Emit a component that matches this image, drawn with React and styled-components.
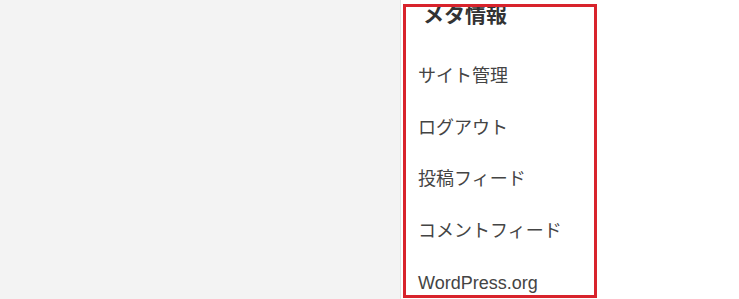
import styled, { createGlobalStyle } from 'styled-components'

const GlobalStyle = createGlobalStyle`
  html, body {
    margin: 0;
    padding: 0;
    background: #ffffff;
  }
  body {
    font-family: "Liberation Sans", "Noto Sans CJK JP", sans-serif;
    color: #333333;
  }
`

const Page = styled.div`
  display: flex;
  width: 739px;
  height: 299px;
  overflow: hidden;
  background: #ffffff;
`

const MainColumn = styled.div`
  width: 400px;
  height: 100%;
  background: #f3f3f3;
  border-right: 1px solid #e2e2e2;
  flex-shrink: 0;
`

const SideColumn = styled.aside`
  padding: 4px 0 0 2px;
`

const Widget = styled.section`
  box-sizing: border-box;
  width: 194px;
  height: 294px;
  border: 3px solid #d8232c;
  overflow: hidden;
  padding: 0 0 0 12px;
`

const WidgetTitle = styled.h2`
  margin: -7px 0 21px 5px;
  font-size: 21px;
  line-height: 30px;
  font-weight: 700;
  color: #333333;
  white-space: nowrap;
`

const LinkList = styled.ul`
  list-style: none;
  margin: 0;
  padding: 0;
`

const LinkItem = styled.li`
  padding: 12px 0;
  line-height: 27.7px;
  font-size: 18px;
  color: #444444;
  white-space: nowrap;
`

const links = ['サイト管理', 'ログアウト', '投稿フィード', 'コメントフィード', 'WordPress.org']

export default function App () {
  return (
    <>
      <GlobalStyle />
      <Page>
        <MainColumn />
        <SideColumn>
          <Widget>
            <WidgetTitle>メタ情報</WidgetTitle>
            <LinkList>
              {links.map(label => (
                <LinkItem key={label}>{label}</LinkItem>
              ))}
            </LinkList>
          </Widget>
        </SideColumn>
      </Page>
    </>
  )
}
